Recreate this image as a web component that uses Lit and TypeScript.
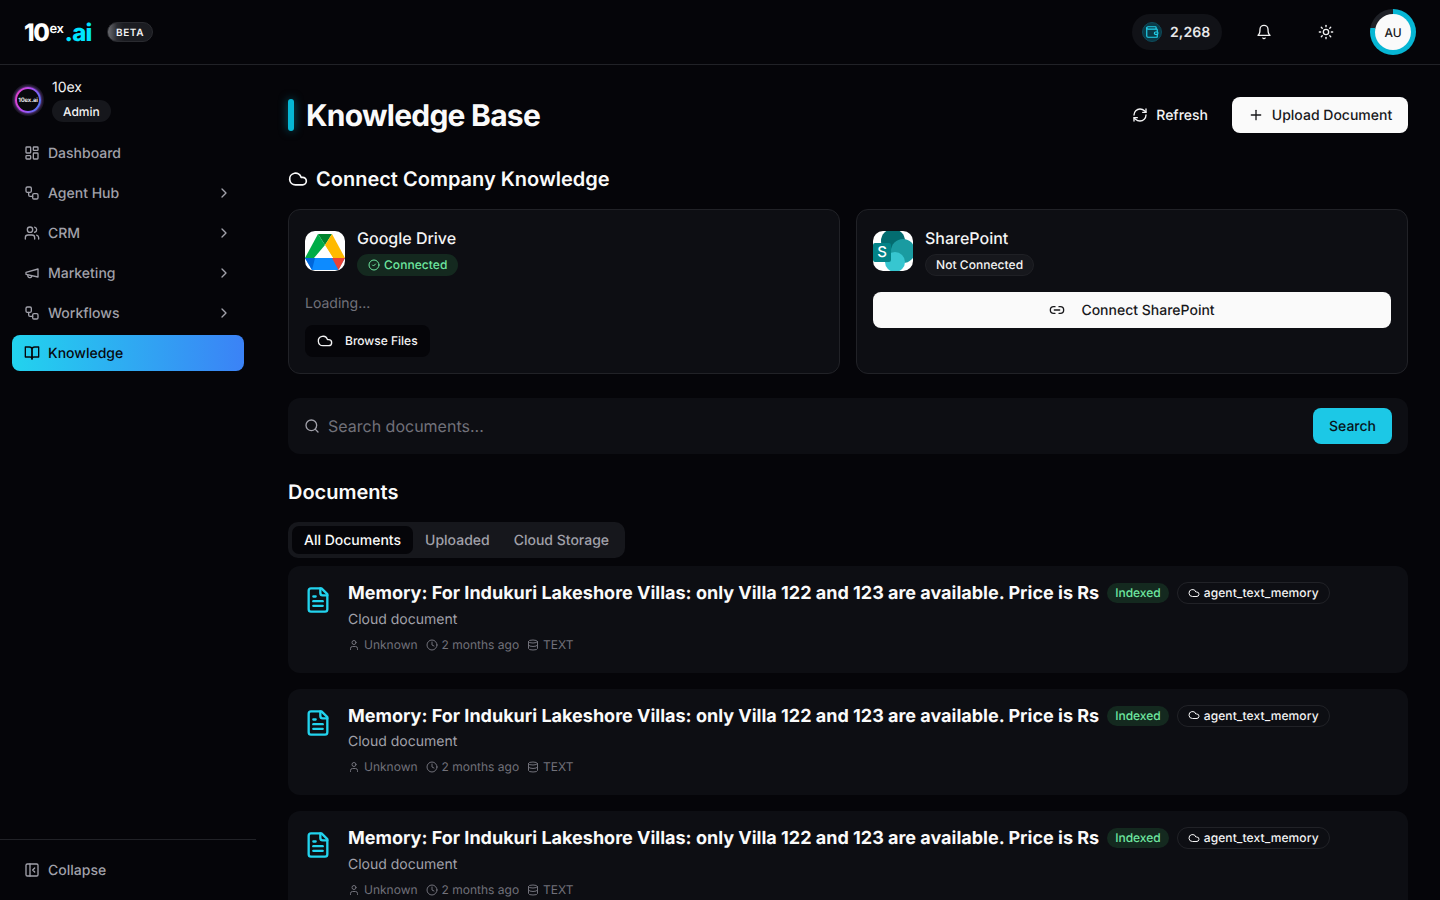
import { LitElement, html, css, svg } from "lit";
import { customElement } from "lit/decorators.js";

const I = {
  dash: svg`<rect x="3" y="3" width="7" height="9" rx="1"/><rect x="14" y="3" width="7" height="5" rx="1"/><rect x="14" y="12" width="7" height="9" rx="1"/><rect x="3" y="16" width="7" height="5" rx="1"/>`,
  flow: svg`<rect width="8" height="8" x="3" y="3" rx="2"/><path d="M7 11v4a2 2 0 0 0 2 2h4"/><rect width="8" height="8" x="13" y="13" rx="2"/>`,
  users: svg`<path d="M16 21v-2a4 4 0 0 0-4-4H6a4 4 0 0 0-4 4v2"/><circle cx="9" cy="7" r="4"/><path d="M22 21v-2a4 4 0 0 0-3-3.87"/><path d="M16 3.13a4 4 0 0 1 0 7.75"/>`,
  mega: svg`<path d="m3 11 18-5v12L3 14v-3z"/><path d="M11.6 16.8a3 3 0 1 1-5.8-1.6"/>`,
  chev: svg`<path d="m9 18 6-6-6-6"/>`,
  book: svg`<path d="M2 3h6a4 4 0 0 1 4 4v14a3 3 0 0 0-3-3H2z"/><path d="M22 3h-6a4 4 0 0 0-4 4v14a3 3 0 0 1 3-3h7z"/>`,
  panel: svg`<rect width="18" height="18" x="3" y="3" rx="2"/><path d="M9 3v18"/><path d="m16 15-3-3 3-3"/>`,
  refresh: svg`<path d="M3 12a9 9 0 0 1 9-9 9.75 9.75 0 0 1 6.74 2.74L21 8"/><path d="M21 3v5h-5"/><path d="M21 12a9 9 0 0 1-9 9 9.75 9.75 0 0 1-6.74-2.74L3 16"/><path d="M8 16H3v5"/>`,
  plus: svg`<path d="M5 12h14"/><path d="M12 5v14"/>`,
  cloud: svg`<path d="M17.5 19H9a7 7 0 1 1 6.71-9h1.79a4.5 4.5 0 1 1 0 9Z"/>`,
  check: svg`<circle cx="12" cy="12" r="10"/><path d="m9 12 2 2 4-4"/>`,
  link: svg`<path d="M9 17H7A5 5 0 0 1 7 7h2"/><path d="M15 7h2a5 5 0 1 1 0 10h-2"/><line x1="8" x2="16" y1="12" y2="12"/>`,
  search: svg`<circle cx="11" cy="11" r="8"/><path d="m21 21-4.3-4.3"/>`,
  file: svg`<path d="M15 2H6a2 2 0 0 0-2 2v16a2 2 0 0 0 2 2h12a2 2 0 0 0 2-2V7Z"/><path d="M14 2v4a2 2 0 0 0 2 2h4"/><path d="M10 9H8"/><path d="M16 13H8"/><path d="M16 17H8"/>`,
  user: svg`<path d="M19 21v-2a4 4 0 0 0-4-4H9a4 4 0 0 0-4 4v2"/><circle cx="12" cy="7" r="4"/>`,
  clock: svg`<circle cx="12" cy="12" r="10"/><polyline points="12 6 12 12 16 14"/>`,
  db: svg`<ellipse cx="12" cy="5" rx="9" ry="3"/><path d="M3 5V19A9 3 0 0 0 21 19V5"/><path d="M3 12A9 3 0 0 0 21 12"/>`,
  bell: svg`<path d="M6 8a6 6 0 0 1 12 0c0 7 3 9 3 9H3s3-2 3-9"/><path d="M10.3 21a1.94 1.94 0 0 0 3.4 0"/>`,
  sun: svg`<circle cx="12" cy="12" r="4"/><path d="M12 2v2"/><path d="M12 20v2"/><path d="m4.93 4.93 1.41 1.41"/><path d="m17.66 17.66 1.41 1.41"/><path d="M2 12h2"/><path d="M20 12h2"/><path d="m6.34 17.66-1.41 1.41"/><path d="m19.07 4.93-1.41 1.41"/>`,
  wallet: svg`<path d="M19 7V4a1 1 0 0 0-1-1H5a2 2 0 0 0 0 4h15a1 1 0 0 1 1 1v4h-3a2 2 0 0 0 0 4h3a1 1 0 0 0 1-1v-2a1 1 0 0 0-1-1"/><path d="M3 5v14a2 2 0 0 0 2 2h15a1 1 0 0 0 1-1v-4"/>`,
};

const icon = (p: unknown, size = 16, sw = 2) =>
  html`<svg class="ic" width=${size} height=${size} viewBox="0 0 24 24" fill="none" stroke="currentColor" stroke-width=${sw} stroke-linecap="round" stroke-linejoin="round">${p}</svg>`;

const TITLE = "Memory: For Indukuri Lakeshore Villas: only Villa 122 and 123 are available. Price is Rs";

@customElement("app-root")
export class AppRoot extends LitElement {
  static styles = css`
    :host { display: block; height: 900px; overflow: hidden; background: #050509; color: #fafafa;
      font-family: Inter, "Liberation Sans", sans-serif; font-size: 14px; text-rendering: geometricPrecision; -webkit-font-smoothing: antialiased; }
    * { box-sizing: border-box; }
    .ic { flex: none; display: block; }
    header { height: 65px; border-bottom: 1px solid #212227; display: flex; align-items: center; padding: 0 24px; }
    .logo { width: 68px; margin-top: 2px; display: flex; align-items: baseline; font-size: 24px; font-weight: 800; letter-spacing: -1.4px; color: #fff; line-height: 30px; white-space: nowrap; }
    .logo sup { font-size: 13px; font-weight: 600; letter-spacing: -0.4px; line-height: 0; position: relative; top: -8px; vertical-align: baseline; margin-left: 1px; }
    .logo b { color: #00e5ff; font-weight: 800; letter-spacing: -0.7px; margin-left: 1px; }
    .beta { margin-left: 15px; height: 20px; width: 46px; padding-top: 1px; border-radius: 10px; border: 1px solid #2a2b30; display: flex; align-items: center; justify-content: center;
      font-size: 10px; font-weight: 600; letter-spacing: 0.6px; background: linear-gradient(90deg, #6a6b70 0, #2a2b30 9px, #1b1c21 16px); color: #f2f2f2; }
    .right { margin-left: auto; display: flex; align-items: center; }
    .credits { width: 90px; height: 36px; border-radius: 18px; background: #111217; display: flex; align-items: center; padding-left: 10px; gap: 8px; font-weight: 600; font-size: 14px; letter-spacing: 0.1px; color: #e8e8ea; }
    .wal { width: 20px; height: 20px; border-radius: 50%; background: #0b3a47; border: 1px solid #0d4a5a; color: #22d3ee; display: flex; align-items: center; justify-content: center; }
    .hbtn { width: 36px; height: 36px; display: flex; align-items: center; justify-content: center; color: #f2f2f2; }
    .bell { margin-left: 24px; }
    .sun { margin-left: 26px; }
    .av { margin-left: 26px; margin-right: 0; width: 46px; height: 46px; border-radius: 50%; display: flex; align-items: center; justify-content: center;
      background: conic-gradient(#06b6d4 0 78%, #1e2026 78% 100%); }
    .av span { width: 36px; height: 36px; border-radius: 50%; background: #fafafa; color: #18181b; font-size: 12px; font-weight: 500; display: flex; align-items: center; justify-content: center; }
    .layout { display: flex; height: 835px; }
    aside { width: 256px; flex: none; display: flex; flex-direction: column; height: 835px; }
    .prof { display: flex; align-items: center; gap: 8px; padding: 0 12px; height: 70px; }
    .pav { width: 32px; height: 32px; border-radius: 50%; background: radial-gradient(circle, #201a2e 0, #16141d 70%, #0c0b12 100%); display: flex; align-items: center; justify-content: center; }
    .pav span { width: 26px; height: 26px; border-radius: 50%; border: 2px solid transparent;
      background: linear-gradient(#08080d, #08080d) padding-box, linear-gradient(110deg, #f03fc0, #b44cf5 45%, #3b82f6) border-box;
      font-size: 6px; font-weight: 700; letter-spacing: -0.2px; color: #e4e4e7; display: flex; align-items: center; justify-content: center; box-shadow: 0 0 3px #a855f7; white-space: nowrap; }
    .pname { font-size: 14px; line-height: 20px; color: #f4f4f5; }
    .role { display: inline-flex; align-items: center; height: 22px; padding: 0 11px; margin-top: 2px; border-radius: 11px; background: #16171c; font-size: 12px; font-weight: 500; color: #f4f4f5; }
    nav { padding: 0 12px; display: flex; flex-direction: column; gap: 4px; }
    .ni { height: 36px; display: flex; align-items: center; gap: 8px; padding: 0 12px; border-radius: 8px; color: #a1a1aa; font-size: 14px; font-weight: 500; }
    .ni .c { margin-left: auto; margin-right: 0; }
    .ni.active { background: linear-gradient(90deg, #22d3ee, #3b82f6); color: #07080c; }
    .coll { margin-top: auto; border-top: 1px solid #212227; height: 61px; padding: 12px 12px 0; }
    main { flex: 1; min-width: 0; padding: 32px 32px 0; overflow: hidden; }
    .top { display: flex; align-items: center; height: 36px; }
    .bar { width: 6px; height: 32px; border-radius: 3px; background: #06b6d4; box-shadow: 0 0 10px rgba(6,182,212,.5); }
    h1 { margin: 2px 0 0 12px; font-size: 30px; font-weight: 700; letter-spacing: -0.75px; line-height: 36px; color: #fafafa; }
    .ref { margin-left: auto; height: 36px; display: flex; align-items: center; gap: 8px; padding: 0 16px 0 16px; font-weight: 500; color: #f4f4f5; margin-right: 8px; }
    .btn { height: 36px; border-radius: 8px; background: #fafafa; color: #18181b; display: flex; align-items: center; justify-content: center; gap: 8px; font-weight: 500; font-size: 14px; }
    .up { width: 176px; }
    h2 { margin: 0; display: flex; align-items: center; gap: 8px; font-size: 20px; font-weight: 600; line-height: 28px; color: #fafafa; }
    .sec { margin-top: 32px; }
    .cards { margin-top: 16px; display: grid; grid-template-columns: 1fr 1fr; gap: 16px; }
    .card { height: 165px; border: 1px solid #212227; border-radius: 12px; background: #0d0e13; padding: 16px; }
    .chead { display: flex; align-items: center; gap: 12px; }
    .logoBox { width: 40px; height: 40px; border-radius: 10px; background: #fff; overflow: hidden; flex: none; }
    .cname { font-size: 16px; font-weight: 500; line-height: 24px; color: #f4f4f5; }
    .pill { display: inline-flex; align-items: center; gap: 4px; height: 22px; border-radius: 11px; padding: 0 11px 1px; font-size: 12px; font-weight: 500; margin-top: 4px; vertical-align: top; letter-spacing: 0.05px; }
    .green { background: #14291f; color: #6ee7a0; }
    .gray { background: #16171c; color: #f4f4f5; border: 1px solid #1f2025; padding: 0 10px 1px; }
    .load { margin-top: 18px; color: #71717a; line-height: 20px; }
    .browse { margin-top: 11px; width: 125px; height: 32px; padding-bottom: 1px; border-radius: 8px; background: #050509; display: flex; align-items: center; gap: 12px; padding-left: 12px; font-size: 12px; font-weight: 500; color: #f4f4f5; }
    .conn { margin-top: 16px; width: 100%; gap: 16px; }
    .sbar { margin-top: 24px; height: 56px; border-radius: 12px; background: #0d0e13; display: flex; align-items: center; padding: 0 16px; color: #a1a1aa; }
    .ph { margin-left: 8px; font-size: 16px; color: #71717a; }
    .sbtn { margin-left: auto; width: 79px; height: 36px; border-radius: 8px; background: #1cc8e6; color: #07141a; font-weight: 500; display: flex; align-items: center; justify-content: center; }
    .dh { margin-top: 24px; }
    .tabs { margin-top: 16px; display: inline-flex; height: 36px; padding: 4px; border-radius: 10px; background: #16171c; color: #a1a1aa; font-weight: 500; }
    .tabs span { padding: 0 12px; display: flex; align-items: center; }
    .tabs .on { background: #050509; color: #fafafa; border-radius: 7px; }
    .docs { margin-top: 8px; display: flex; flex-direction: column; gap: 16px; }
    .doc { height: 106.5px; border-radius: 12px; background: #0d0e13; padding: 16px; display: flex; gap: 16px; }
    .fi { color: #22d3ee; margin-top: 4px; }
    .dt { display: flex; align-items: center; height: 23px; white-space: nowrap; gap: 8px; }
    .dt strong { font-size: 18px; font-weight: 700; color: #fafafa; }
    .idx { height: 20px; margin-top: -1px; padding: 0 8px 1px; border-radius: 10px; background: #14291f; color: #6ee7a0; font-size: 12px; font-weight: 500; display: flex; align-items: center; }
    .tag { height: 22px; margin-top: -1px; padding: 0 10px 1px; border-radius: 11px; border: 1px solid #212227; font-size: 12px; font-weight: 500; letter-spacing: 0.1px; color: #f4f4f5; display: flex; align-items: center; gap: 4px; }
    .sub { margin-top: 4.5px; line-height: 20px; color: #a1a1aa; }
    .meta { margin-top: 7px; display: flex; align-items: center; font-size: 12px; line-height: 16px; color: #71717a; }
    .meta .m { display: flex; align-items: center; gap: 4px; margin-right: 8px; }
  `;

  nav(ic: unknown, label: string, opts: { c?: boolean; active?: boolean } = {}) {
    return html`<div class="ni ${opts.active ? "active" : ""}">${icon(ic)}<span>${label}</span>${opts.c ? html`<span class="c">${icon(I.chev)}</span>` : ""}</div>`;
  }

  doc() {
    return html`<div class="doc">
      <div class="fi">${icon(I.file, 28)}</div>
      <div>
        <div class="dt"><strong>${TITLE}</strong><span class="idx">Indexed</span><span class="tag">${icon(I.cloud, 12)}agent_text_memory</span></div>
        <div class="sub">Cloud document</div>
        <div class="meta">
          <span class="m">${icon(I.user, 12)}Unknown</span>
          <span class="m">${icon(I.clock, 12)}2 months ago</span>
          <span class="m">${icon(I.db, 12)}TEXT</span>
        </div>
      </div>
    </div>`;
  }

  render() {
    return html`
      <header>
        <div class="logo">10<sup>ex</sup><b>.ai</b></div>
        <div class="beta">BETA</div>
        <div class="right">
          <div class="credits"><span class="wal">${icon(I.wallet, 14)}</span>2,268</div>
          <div class="hbtn bell">${icon(I.bell)}</div>
          <div class="hbtn sun">${icon(I.sun)}</div>
          <div class="av"><span>AU</span></div>
        </div>
      </header>
      <div class="layout">
        <aside>
          <div class="prof">
            <div class="pav"><span>10ex.ai</span></div>
            <div><div class="pname">10ex</div><div class="role">Admin</div></div>
          </div>
          <nav>
            ${this.nav(I.dash, "Dashboard")}
            ${this.nav(I.flow, "Agent Hub", { c: true })}
            ${this.nav(I.users, "CRM", { c: true })}
            ${this.nav(I.mega, "Marketing", { c: true })}
            ${this.nav(I.flow, "Workflows", { c: true })}
            ${this.nav(I.book, "Knowledge", { active: true })}
          </nav>
          <div class="coll">${this.nav(I.panel, "Collapse")}</div>
        </aside>
        <main>
          <div class="top">
            <div class="bar"></div>
            <h1>Knowledge Base</h1>
            <div class="ref">${icon(I.refresh)}Refresh</div>
            <div class="btn up">${icon(I.plus)}Upload Document</div>
          </div>
          <h2 class="sec">${icon(I.cloud, 20)}Connect Company Knowledge</h2>
          <div class="cards">
            <div class="card">
              <div class="chead">
                <div class="logoBox">
                  <svg width="40" height="40" viewBox="0 0 40 40">
                    <path d="M13 3H27L20 14Z" fill="#00832d"/>
                    <path d="M13 3 L0 27 L9 27 L20 14 Z" fill="#00ac47"/>
                    <path d="M27 3 L40 27 H28 L20 14 Z" fill="#ffba00"/>
                    <path d="M0 27H40L33 39H7Z" fill="#0d8bff"/>
                    <path d="M40 27H27L33.5 39Z" fill="#ea4335"/>
                    <path d="M0 27H10L7 39Z" fill="#0066da"/>
                    <path d="M12 27 L20 15 L28 27Z" fill="#fff"/>
                  </svg>
                </div>
                <div><div class="cname">Google Drive</div><span class="pill green">${icon(I.check, 12)} Connected</span></div>
              </div>
              <div class="load">Loading...</div>
              <div class="browse">${icon(I.cloud, 16)}Browse Files</div>
            </div>
            <div class="card">
              <div class="chead">
                <div class="logoBox">
                  <svg width="40" height="40" viewBox="0 0 40 40">
                    <circle cx="20" cy="10" r="12" fill="#036c70"/>
                    <circle cx="30" cy="20" r="12" fill="#1a9ba1"/>
                    <circle cx="22" cy="31" r="10" fill="#37c6d0"/>
                    <rect x="0" y="12" width="18" height="19" rx="2" fill="#038387"/>
                    <text x="9" y="26" text-anchor="middle" font-family="Inter, sans-serif" font-size="15" font-weight="500" fill="#fff">S</text>
                  </svg>
                </div>
                <div><div class="cname">SharePoint</div><span class="pill gray">Not Connected</span></div>
              </div>
              <div class="btn conn">${icon(I.link)}Connect SharePoint</div>
            </div>
          </div>
          <div class="sbar">${icon(I.search)}<span class="ph">Search documents...</span><div class="sbtn">Search</div></div>
          <h2 class="dh">Documents</h2>
          <div class="tabs"><span class="on">All Documents</span><span>Uploaded</span><span>Cloud Storage</span></div>
          <div class="docs">${this.doc()}${this.doc()}${this.doc()}</div>
        </main>
      </div>
    `;
  }
}
